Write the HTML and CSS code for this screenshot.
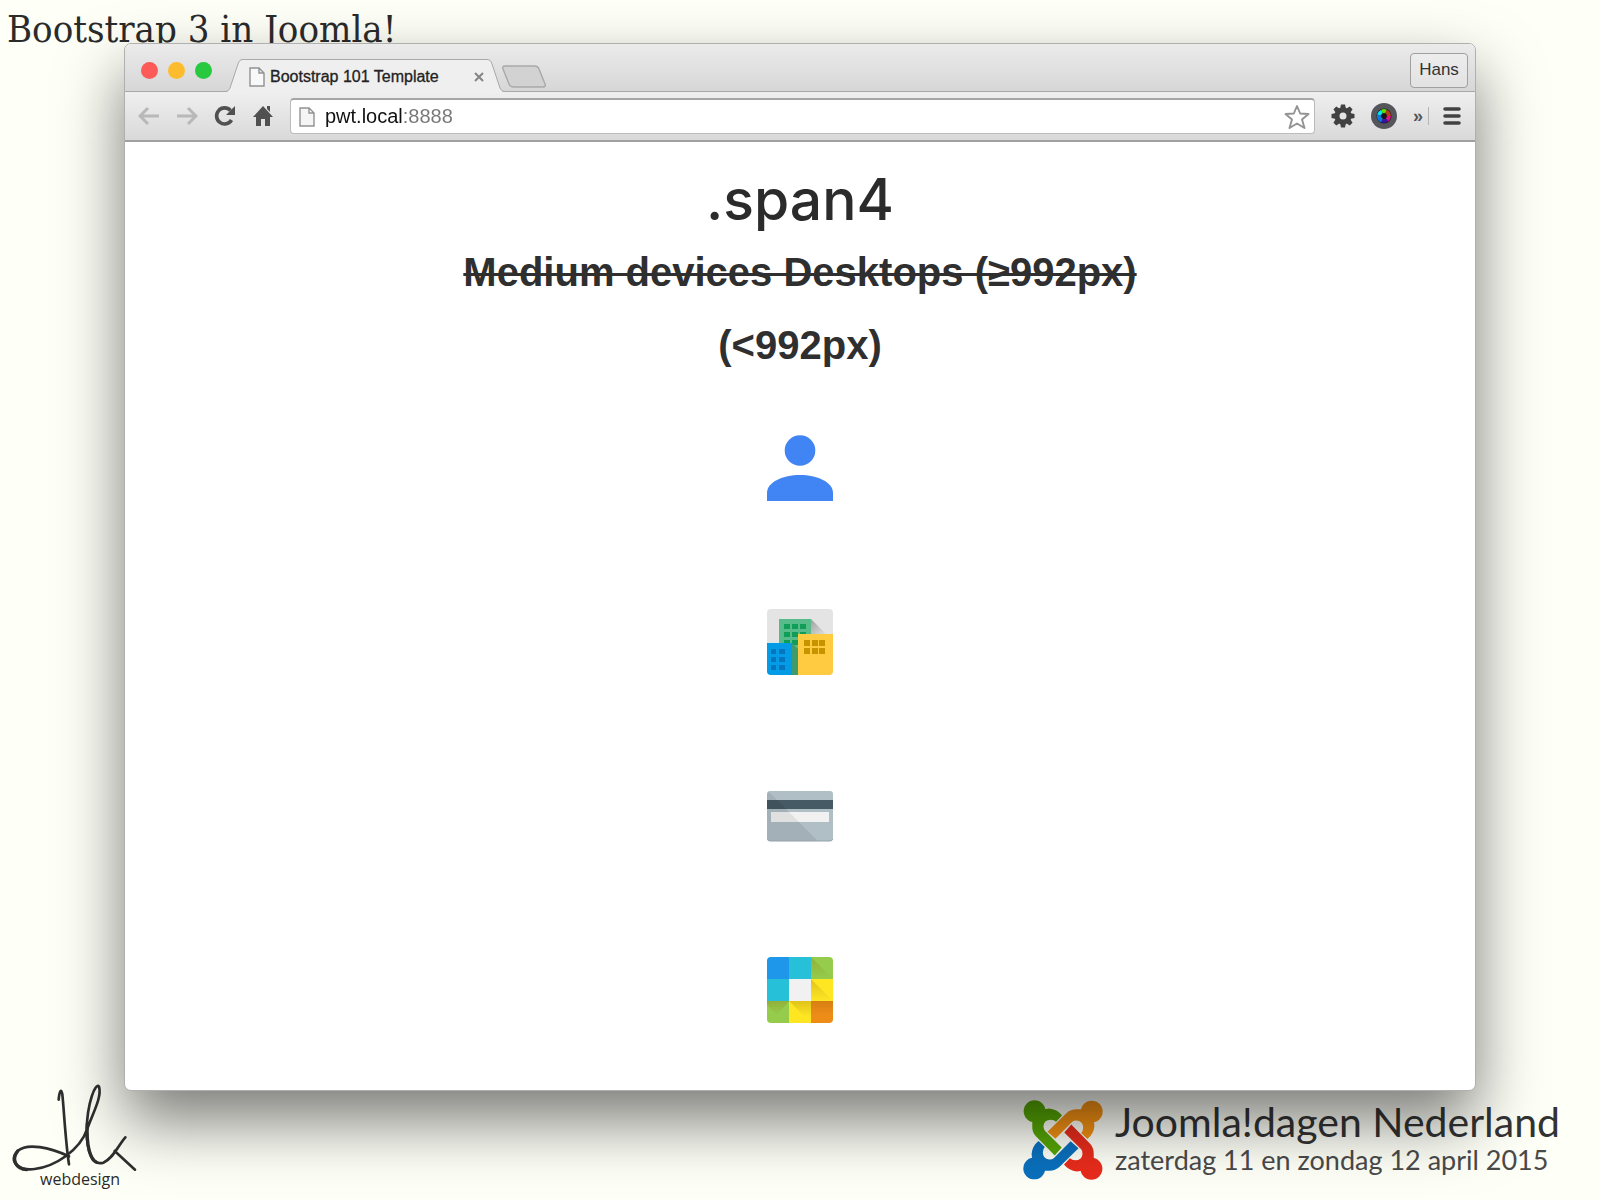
FILE: index.html
```html
<!DOCTYPE html>
<html lang="nl">
<head>
  <meta charset="UTF-8" />
  <title>Bootstrap 3 in Joomla!</title>
  <meta name="viewport" content="width=device-width, initial-scale=1.0" />
  <link rel="stylesheet" href="styles.css">
</head>
<body>

  <h1 class="slide-title">Bootstrap 3 in Joomla!</h1>

  <main class="browser">
    <div class="tabbar">
      <div class="lights">
        <span class="light red"></span>
        <span class="light yellow"></span>
        <span class="light green"></span>
      </div>

      <div class="tab">
        <svg class="tab-edge" viewBox="0 0 18 34" width="18" height="34">
          <path d="M0 34 V33 C3 33 4 31 5 29 L13 5 C14 2 15 .5 18 .5 V34 Z" fill="#efefef" />
          <path d="M0 32.5 C3 32.5 4 31 5 29 L13 5 C14 2 15 .5 18 .5" fill="none" stroke="#a9a9a9" />
        </svg>
        <div class="tab-body">
          <svg viewBox="0 0 16 20" width="16" height="20">
            <path d="M1 1 H10 L15 6 V19 H1 Z M10 1 V6 H15" fill="#f8f8f8" stroke="#929292" stroke-width="1.4" />
          </svg>
          <span class="tab-title">Bootstrap 101 Template</span>
          <button class="tab-close" type="button" aria-label="Close tab">
            <svg viewBox="0 0 10 10" width="10" height="10">
              <path d="M1 1 L9 9 M9 1 L1 9" stroke="#858585" stroke-width="2" />
            </svg>
          </button>
        </div>
        <svg class="tab-edge" viewBox="0 0 18 34" width="18" height="34">
          <path d="M18 34 V33 C15 33 14 31 13 29 L5 5 C4 2 3 .5 0 .5 V34 Z" fill="#efefef" />
          <path d="M18 32.5 C15 32.5 14 31 13 29 L5 5 C4 2 3 .5 0 .5" fill="none" stroke="#a9a9a9" />
        </svg>
      </div>

      <button class="new-tab" type="button" aria-label="New tab">
        <svg viewBox="0 0 46 24" width="46" height="24">
          <path d="M4 1 H33 Q37 1 38 4 L44 19 Q45 22 42 22 H13 Q9 22 8 19 L2 4 Q1 1 4 1 Z" fill="#d2d2d2" stroke="#a9a9a9" stroke-width="1.4" />
        </svg>
      </button>

      <button class="profile" type="button">Hans</button>
    </div>

    <div class="toolbar">
      <button type="button" aria-label="Back">
        <svg viewBox="0 0 22 20" width="22" height="20">
          <path d="M21 10 H3 M10 2 L2 10 L10 18" fill="none" stroke="#b8b8b8" stroke-width="3" />
        </svg>
      </button>
      <button type="button" aria-label="Forward">
        <svg viewBox="0 0 22 20" width="22" height="20">
          <path d="M1 10 H19 M12 2 L20 10 L12 18" fill="none" stroke="#b8b8b8" stroke-width="3" />
        </svg>
      </button>
      <button type="button" aria-label="Reload">
        <svg viewBox="0 0 22 22" width="22" height="22">
          <path d="M17.5 15 A8 8 0 1 1 16.500 5.500" fill="none" stroke="#505050" stroke-width="3.600" />
          <path d="M21 1 V10 H12 Z" fill="#505050" />
        </svg>
      </button>
      <button type="button" aria-label="Home">
        <svg viewBox="0 0 22 22" width="22" height="22">
          <path d="M11 1 L21 12 H18 V21 H13 V14 H9 V21 H4 V12 H1 Z" fill="#505050" />
          <path d="M15 1 H18 V7 L15 4 Z" fill="#505050" />
        </svg>
      </button>

      <div class="address">
        <svg viewBox="0 0 16 20" width="16" height="20">
          <path d="M1 1 H10 L15 6 V19 H1 Z M10 1 V6 H15" fill="#f5f5f5" stroke="#929292" stroke-width="1.4" />
        </svg>
        <input class="url" type="text" value="pwt.local:8888" aria-label="Address" />
        <button type="button" aria-label="Bookmark">
          <svg viewBox="0 0 26 26" width="26" height="26">
            <path d="M13 2 L16.200 9.500 L24.500 10 L18 15.500 L20.500 24 L13 19.500 L5.500 24 L8 15.500 L1.500 10 L9.800 9.500 Z" fill="#fff" stroke="#929292" stroke-width="1.900" stroke-linejoin="round" />
          </svg>
        </button>
      </div>

      <div class="extensions">
        <button type="button" aria-label="Settings">
          <svg viewBox="-12 -12 24 24" width="24" height="24">
            <circle r="6" fill="none" stroke="#414141" stroke-width="5" />
            <g fill="#414141">
              <path id="tooth" d="M-3 -7 L-2 -11.500 H2 L3 -7 Z" />
              <use href="#tooth" transform="rotate(45)" />
              <use href="#tooth" transform="rotate(90)" />
              <use href="#tooth" transform="rotate(135)" />
              <use href="#tooth" transform="rotate(180)" />
              <use href="#tooth" transform="rotate(225)" />
              <use href="#tooth" transform="rotate(270)" />
              <use href="#tooth" transform="rotate(315)" />
            </g>
          </svg>
        </button>
        <button type="button" aria-label="Color picker">
          <svg viewBox="-13 -13 26 26" width="26" height="26">
            <circle r="13" fill="#54565c" />
            <circle r="7.500" fill="#161616" />
            <g fill="none" stroke-width="4">
              <path d="M-5 -1 A5 5 0 0 1 -2 -4.500" stroke="#00e5f0" />
              <path d="M-2 -4.500 A5 5 0 0 1 2 -4.500" stroke="#5fe000" />
              <path d="M2 -4.500 A5 5 0 0 1 5 0" stroke="#b3401a" />
              <path d="M5 0 A5 5 0 0 1 3 4" stroke="#e0108c" />
              <path d="M3 4 A5 5 0 0 1 -2 4.500" stroke="#3a14a0" />
              <path d="M-2 4.500 A5 5 0 0 1 -5 -1" stroke="#0a78e0" />
            </g>
          </svg>
        </button>
        <button class="more" type="button" aria-label="More extensions">»</button>
        <button class="menu" type="button" aria-label="Menu">
          <svg viewBox="0 0 18 18" width="18" height="18">
            <path d="M2 2 H16 M2 9 H16 M2 16 H16" stroke="#414141" stroke-width="3.500" stroke-linecap="round" />
          </svg>
        </button>
      </div>
    </div>

    <div class="page">
      <h2>.span4</h2>
      <p><s>Medium devices Desktops (≥992px)</s></p>
      <p>(&lt;992px)</p>

      <div class="icons">
        <svg viewBox="0 0 66 66" width="66" height="66">
          <circle cx="33" cy="15.500" r="15.300" fill="#4184f3" />
          <path d="M0 66 V58 C0 47 16 40 33 40 C50 40 66 47 66 58 V66 Z" fill="#4184f3" />
        </svg>

        <svg viewBox="0 0 66 66" width="66" height="66">
          <defs>
            <clipPath id="tile"><rect width="66" height="66" rx="4" /></clipPath>
            <linearGradient id="cast" x1="0" y1="0" x2="1" y2="1">
              <stop offset="0" stop-color="#000" stop-opacity=".3" />
              <stop offset="1" stop-color="#000" stop-opacity="0" />
            </linearGradient>
          </defs>
          <g clip-path="url(#tile)">
            <rect width="66" height="66" fill="#e4e4e4" />
            <path d="M44 10 L60 26 H44 Z" fill="url(#cast)" />
            <rect x="12" y="10" width="32" height="56" fill="#57bb8a" />
            <path d="M17 15h6v5h-6z M25 15h6v5h-6z M33 15h6v5h-6z M17 23h6v5h-6z M25 23h6v5h-6z M33 23h6v5h-6z M17 31h6v5h-6z M25 31h6v5h-6z" fill="#0f9d58" />
            <path d="M25 34 L31 40 V66 H25 Z" fill="#3f9a6c" />
            <rect y="34" width="25" height="32" fill="#039be5" />
            <path d="M4 40h5v5h-5z M12 40h6v5h-6z M4 48h5v5h-5z M12 48h6v5h-6z M4 56h5v5h-5z M12 56h6v5h-6z" fill="#0277bd" />
            <rect x="31" y="25" width="35" height="41" fill="#ffcb41" />
            <path d="M37 31h6v6h-6z M45 31h6v6h-6z M52 31h6v6h-6z M37 39h6v6h-6z M45 39h6v6h-6z M52 39h6v6h-6z" fill="#c79400" />
          </g>
        </svg>

        <svg viewBox="0 0 66 66" width="66" height="66">
          <rect y="8" width="66" height="50" rx="3" fill="#b0bec5" />
          <rect y="17" width="66" height="9" fill="#455a64" />
          <rect x="4" y="29" width="58" height="10" fill="#f1f1f1" />
          <path d="M2 9 L51 58 H3 Q0 58 0 55 V11 Z" fill="#000" opacity=".07" />
          <path d="M0 56 Q1 58 3 58 H63 Q65 58 66 56" fill="none" stroke="#95a3aa" />
        </svg>

        <svg viewBox="0 0 66 66" width="66" height="66">
          <defs>
            <linearGradient id="fade" x1="0" y1="0" x2="0" y2="1">
              <stop offset="0" stop-color="#8a5a00" stop-opacity=".25" />
              <stop offset="1" stop-color="#8a5a00" stop-opacity="0" />
            </linearGradient>
          </defs>
          <g clip-path="url(#tile)">
            <rect width="22" height="22" fill="#1e96ea" />
            <rect x="22" width="22" height="22" fill="#26c0d8" />
            <rect x="44" width="22" height="22" fill="#95cc4c" />
            <rect y="22" width="22" height="22" fill="#26c0d8" />
            <rect x="22" y="22" width="22" height="22" fill="#f1f1f1" />
            <rect x="44" y="22" width="22" height="22" fill="#fee623" />
            <rect y="44" width="22" height="22" fill="#95cc4c" />
            <rect x="22" y="44" width="22" height="22" fill="#fee623" />
            <rect x="44" y="44" width="22" height="22" fill="#ee8c18" />
            <path d="M44 0 L66 22 H44 Z" fill="url(#fade)" />
            <path d="M44 22 L66 44 H44 Z" fill="url(#fade)" />
            <path d="M0 44 H22 L10 58 L0 48 Z" fill="url(#fade)" />
            <path d="M22 44 H44 V60 L38 60 Z" fill="url(#fade)" />
            <path d="M44 44 H66 V58 H44 Z" fill="url(#fade)" />
          </g>
        </svg>
      </div>
    </div>
  </main>

  <footer class="slide-footer">
    <div class="author">
      <svg viewBox="30 65 384 276" width="128" height="92">
        <g fill="none" stroke="#2f2f2f" stroke-linecap="round" stroke-linejoin="round">
          <path d="M176 118 C178 96 183 80 187 102 C192 150 197 250 207 312" stroke-width="8" />
          <path d="M207 288 C150 262 82 246 53 272 C22 304 58 332 104 326 C166 318 240 270 262 205 C280 155 306 110 297 79 C287 64 262 126 260 208 C260 270 276 318 310 307 C340 294 354 256 376 231" stroke-width="8" />
          <path d="M262 190 C258 258 272 300 290 306 M53 272 C32 300 50 326 80 328" stroke-width="10" />
          <path d="M344 272 L405 328" stroke-width="8" />
        </g>
      </svg>
      <span>webdesign</span>
    </div>

    <div class="event">
      <svg viewBox="-120 -121 240 242" width="80" height="80">
        <defs>
          <g id="arm">
            <circle cx="-86" cy="-87" r="33" />
            <path d="M-93 -60 V-44 Q-94 -24 -82 -11 L-25 47 L-4 23 L-55 -28 Q-60 -34 -59 -42 Q-57 -61 -37 -61 Q-27 -61 -21 -55 L-3 -74 Q-18 -93 -42 -95 Q-52 -95 -64 -90 Z" />
          </g>
        </defs>
        <use href="#arm" fill="#56a605" />
        <use href="#arm" fill="#f49113" transform="rotate(90)" />
        <use href="#arm" fill="#e92c1c" transform="rotate(180)" />
        <use href="#arm" fill="#0a70bd" transform="rotate(270)" />
      </svg>
      <div class="event-text">
        <strong>Joomla!dagen Nederland</strong>
        <span>zaterdag 11 en zondag 12 april 2015</span>
      </div>
    </div>
  </footer>

</body>
</html>
```

FILE: styles.css
```css
* {
  box-sizing: border-box;
}

body {
  margin: 0;
  min-height: 100vh;
  display: flex;
  flex-direction: column;
  overflow-x: hidden;
  background: #fefff7;
  color: #2b2b2b;
  font-family: "Liberation Sans", Arial, sans-serif;
}

h1, h2, p {
  margin: 0;
}

svg {
  display: block;
  flex: none;
}

button {
  padding: 0;
  border: none;
  background: none;
  font-family: inherit;
  cursor: pointer;
}

.slide-title {
  height: 43px;
  padding-left: 7px;
  font-family: "DejaVu Serif Condensed", "DejaVu Serif", serif;
  font-size: 38px;
  font-weight: 400;
  line-height: 58px;
  white-space: nowrap;
}

/* browser window */
.browser {
  position: relative;
  z-index: 1;
  width: 84.5%;
  margin: 0 auto;
  border: 1px solid #b0b0ae;
  border-radius: 7px;
  background: #fff;
  box-shadow: 0 30px 64px rgba(0, 0, 0, 0.52);
}

.tabbar {
  display: flex;
  align-items: flex-end;
  height: 48px;
  padding: 0 7px 0 16px;
  border-radius: 6px 6px 0 0;
  background: linear-gradient(#ebebeb, #d6d6d6);
  box-shadow: inset 0 -1px #a9a9a9;
}

.lights {
  display: flex;
  gap: 10px;
  align-self: center;
  margin-top: 4px;
}

.light {
  width: 17px;
  height: 17px;
  border-radius: 50%;
}

.light.red {
  background: #fc5b57;
}

.light.yellow {
  background: #fdbc2e;
}

.light.green {
  background: #28c83f;
}

.tab {
  display: flex;
  height: 33px;
  margin-left: 13px;
}

.tab-body {
  display: flex;
  align-items: center;
  gap: 5px;
  width: 244px;
  padding: 2px 3px 0 6px;
  border-top: 1px solid #a9a9a9;
  background: #efefef;
}

.tab-title {
  flex: 1;
  color: #222;
  font-size: 16px;
  -webkit-text-stroke: 0.3px #222;
  white-space: nowrap;
}

.new-tab {
  margin-bottom: 3px;
  margin-left: -4px;
}

.profile {
  align-self: center;
  width: 58px;
  height: 35px;
  margin-left: auto;
  margin-top: 4px;
  border: 1px solid #a0a0a0;
  border-radius: 4px;
  background: linear-gradient(#ededed, #e2e2e2);
  color: #333;
  font-size: 17px;
}

.toolbar {
  display: flex;
  align-items: center;
  gap: 16px;
  height: 50px;
  padding: 0 14px 0 13px;
  border-bottom: 2px solid #a0a0a0;
  background: linear-gradient(#efefef, #d9d9d9);
}

.address {
  flex: 1;
  display: flex;
  align-items: center;
  gap: 10px;
  height: 36px;
  padding: 0 4px 0 8px;
  border: 1px solid #bbb;
  border-top: 2px solid #a6a6a6;
  border-radius: 4px;
  background: #fff;
}

.url {
  flex: 1;
  min-width: 0;
  padding: 0;
  border: none;
  outline: none;
  background: linear-gradient(90deg, #111 78px, #777 78px);
  -webkit-background-clip: text;
  background-clip: text;
  color: transparent;
  font-family: inherit;
  font-size: 20px;
}

.extensions {
  display: flex;
  align-items: center;
  gap: 16px;
}

.more {
  color: #555;
  font-size: 18px;
  font-weight: 700;
}

.menu {
  padding-left: 14px;
  border-left: 1px solid #b5b5b5;
  margin-left: -11px;
}

/* page shown in the browser */
.page {
  display: flex;
  flex-direction: column;
  align-items: center;
  padding: 21px 16px 67px;
  text-align: center;
}

.page h2 {
  font-family: Inter, sans-serif;
  font-size: 57px;
  font-weight: 500;
  line-height: 73px;
}

.page p {
  color: #2f2f2f;
  font-size: 40px;
  font-weight: 700;
  line-height: 73px;
}

.page s {
  text-decoration-thickness: 3px;
}

.icons {
  display: flex;
  flex-direction: column;
  gap: 108px;
  margin-top: 53px;
}

/* footer */
.slide-footer {
  display: flex;
  justify-content: space-between;
  align-items: flex-start;
  padding: 0 40px 0 10px;
}

.author {
  display: flex;
  flex-direction: column;
  margin-top: -9px;
  font-family: "Open Sans", sans-serif;
  font-size: 16px;
  line-height: 10px;
}

.author span {
  padding-left: 30px;
}

.event {
  display: flex;
  gap: 12px;
  padding-top: 9px;
}

.event-text {
  display: flex;
  flex-direction: column;
  font-family: Lato, sans-serif;
  white-space: nowrap;
}

.event-text strong {
  color: #333;
  font-size: 41px;
  font-weight: 400;
  line-height: 44px;
}

.event-text span {
  color: #4a4a4a;
  font-size: 27px;
  line-height: 32px;
}
```
